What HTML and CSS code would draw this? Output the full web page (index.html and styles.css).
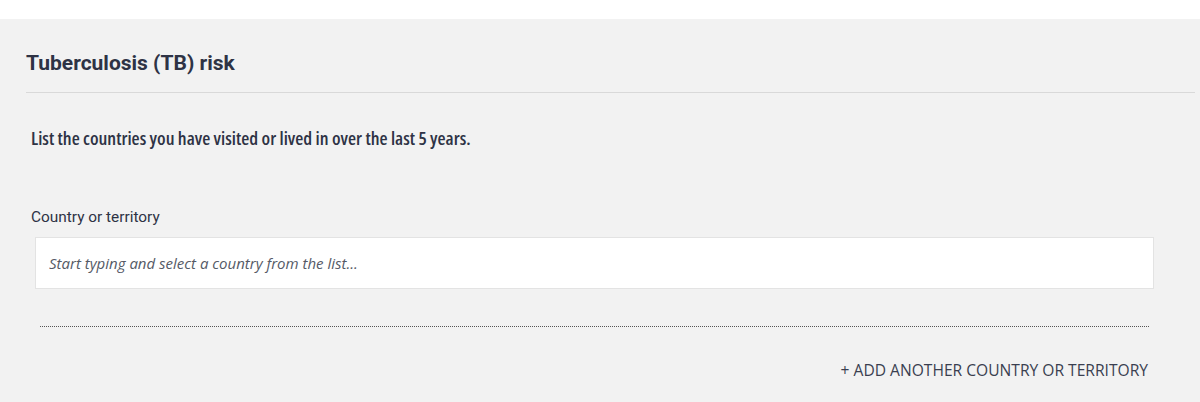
FILE: index.html
```html
<!DOCTYPE html>
<html lang="en">
<head>
  <meta charset="UTF-8" />
  <meta name="viewport" content="width=device-width, initial-scale=1.0" />
  <title>Tuberculosis (TB) risk</title>
  <link rel="stylesheet" href="styles.css">
</head>
<body>
  <div class="panel">
    <h2 class="panel-title">Tuberculosis (TB) risk</h2>
    <div class="panel-body">
      <p class="question">List the countries you have visited or lived in over the last 5 years.</p>
      <div class="field">
        <label class="field-label" for="country">Country or territory</label>
        <input class="field-input" id="country" type="text" placeholder="Start typing and select a country from the list..." />
      </div>
      <div class="dotted-rule"></div>
      <div class="actions">
        <a class="add-link" href="#">+ Add another country or territory</a>
      </div>
    </div>
  </div>
</body>
</html>
```

FILE: styles.css
```css
* { margin: 0; padding: 0; box-sizing: border-box; }
body {
  font-family: 'Open Sans', Roboto, sans-serif;
  background: #fff;
  color: #2e3345;
  height: 100vh;
  overflow: hidden;
  padding-top: 19px;
}
.panel {
  background: #f2f2f2;
  height: 100%;
  padding: 0 5px 0 26px;
}
.panel-title {
  font-family: Roboto, 'Open Sans', sans-serif;
  font-size: 21px;
  font-weight: 700;
  line-height: 26px;
  padding: 31px 0 16px;
  border-bottom: 1px solid #d9d9d9;
}
.panel-body {
  padding: 0 41px 0 5px;
}
.question {
  font-size: 18.5px;
  font-weight: 600;
  font-stretch: condensed;
  line-height: 20px;
  margin-top: 35px;
}
.field {
  margin-top: 59px;
  display: flex;
  flex-direction: column;
}
.field-label {
  font-family: Roboto, 'Open Sans', sans-serif;
  font-size: 15.4px;
  line-height: 20px;
  margin-bottom: 10px;
}
.field-input {
  margin-left: 4px;
  height: 52px;
  border: 1px solid #e3e3e3;
  background: #fff;
  padding: 0 13px;
  font-family: inherit;
  font-size: 15px;
  color: #2e3345;
  outline: none;
}
.field-input::placeholder {
  color: #555a66;
  font-style: italic;
}
.dotted-rule {
  margin: 37px 5px 0 9px;
  border-top: 1px dotted #555;
}
.actions {
  display: flex;
  justify-content: flex-end;
  margin: 33px 6px 0 0;
}
.add-link {
  font-size: 15.6px;
  line-height: 20px;
  color: #3a3f50;
  text-decoration: none;
  text-transform: uppercase;
}
```
